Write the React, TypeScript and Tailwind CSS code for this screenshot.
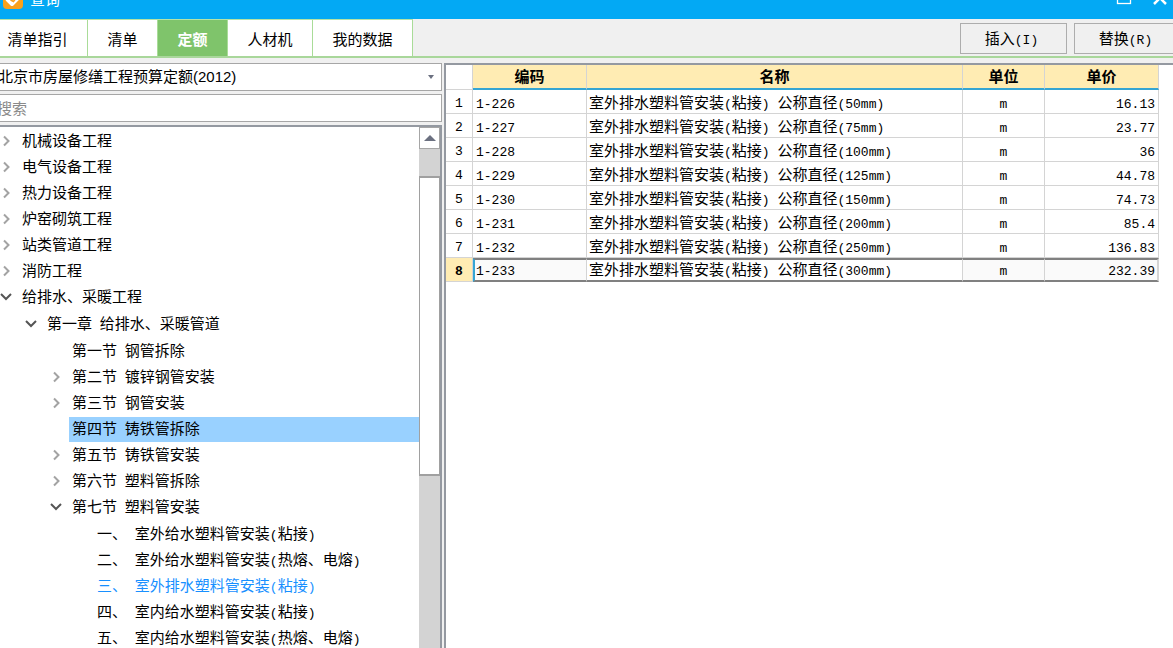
import { useState } from "react";

type Node = { label: string; open?: boolean; leaf?: boolean; children?: Node[] };

const TREE: Node[] = [
  { label: "机械设备工程" },
  { label: "电气设备工程" },
  { label: "热力设备工程" },
  { label: "炉窑砌筑工程" },
  { label: "站类管道工程" },
  { label: "消防工程" },
  {
    label: "给排水、采暖工程",
    open: true,
    children: [
      {
        label: "第一章 给排水、采暖管道",
        open: true,
        children: [
          { label: "第一节 钢管拆除", leaf: true },
          { label: "第二节 镀锌钢管安装" },
          { label: "第三节 钢管安装" },
          { label: "第四节 铸铁管拆除", leaf: true },
          { label: "第五节 铸铁管安装" },
          { label: "第六节 塑料管拆除" },
          {
            label: "第七节 塑料管安装",
            open: true,
            children: [
              { label: "一、 室外给水塑料管安装(粘接)", leaf: true },
              { label: "二、 室外给水塑料管安装(热熔、电熔)", leaf: true },
              { label: "三、 室外排水塑料管安装(粘接)", leaf: true },
              { label: "四、 室内给水塑料管安装(粘接)", leaf: true },
              { label: "五、 室内给水塑料管安装(热熔、电熔)", leaf: true },
            ],
          },
        ],
      },
    ],
  },
];

const HIGHLIGHTED = "第四节 铸铁管拆除";
const CURRENT = "三、 室外排水塑料管安装(粘接)";

const ROWS = [
  ["1-226", "50", "16.13"],
  ["1-227", "75", "23.77"],
  ["1-228", "100", "36"],
  ["1-229", "125", "44.78"],
  ["1-230", "150", "74.73"],
  ["1-231", "200", "85.4"],
  ["1-232", "250", "136.83"],
  ["1-233", "300", "232.39"],
];

const TABS = [
  { label: "清单指引", width: "w-[88px] pr-3" },
  { label: "清单", width: "w-[70px]" },
  { label: "定额", width: "w-[70px]" },
  { label: "人材机", width: "w-[85px]" },
  { label: "我的数据", width: "w-[100px]" },
];

/* Latin runs are set in a monospace face, Chinese runs in the CJK face. */
function Mixed({ text }: { text: string }) {
  return (
    <>
      {text.split(/([\x20-\x7e]+)/).map((run, i) =>
        i % 2 ? (
          <span key={i} className="whitespace-pre font-['Liberation_Mono',monospace] text-[13px] leading-none">
            {run}
          </span>
        ) : (
          run
        ),
      )}
    </>
  );
}

function Chevron({ open }: { open?: boolean }) {
  return open ? (
    <svg className="size-3" viewBox="0 0 12 12" fill="none" stroke="#555" strokeWidth="2">
      <path d="M1 3l5 5 5-5" />
    </svg>
  ) : (
    <svg className="size-3" viewBox="0 0 12 12" fill="none" stroke="#a3a3a3" strokeWidth="2">
      <path d="M4 1.500l4.500 4.500L4 10.500" />
    </svg>
  );
}

function Branch({ nodes, nested }: { nodes: Node[]; nested?: boolean }) {
  return (
    <ul className={nested ? "pt-px pl-[25px]" : "pt-px"}>
      {nodes.map((n) => (
        <li key={n.label}>
          <div className="flex h-[26px] items-center">
            <span className="flex w-[19px] shrink-0">{!n.leaf && <Chevron open={n.open} />}</span>
            <button
              className={`h-[25px] flex-1 pl-[3px] text-left leading-6 whitespace-nowrap ${
                n.label === HIGHLIGHTED ? "bg-[#99d1ff]" : ""
              } ${n.label === CURRENT ? "text-[#1890ff]" : ""}`}
            >
              <Mixed text={n.label} />
            </button>
          </div>
          {n.children && <Branch nodes={n.children} nested />}
        </li>
      ))}
    </ul>
  );
}

export default function App() {
  const [tab, setTab] = useState("定额");
  const [selected, setSelected] = useState(7);

  return (
    <div className="flex h-screen flex-col overflow-hidden bg-[#f0f0f0] font-['Liberation_Sans','Noto_Sans_CJK_SC',sans-serif] text-[15px] text-black">
      <header className="h-[19px] shrink-0 overflow-hidden bg-[#03a9f4] text-white">
        <div className="-mt-[19px] flex h-[38px] items-center pl-[3px]">
          <svg className="size-5" viewBox="0 0 20 20">
            <rect width="20" height="19" rx="4" fill="#f9a11b" />
            <path d="M4 9l5 5 7-7-3-3" fill="none" stroke="#fff" strokeWidth="4" strokeLinejoin="round" />
            <path d="M7.500 10l3 1.500 3-4" fill="none" stroke="#f9a11b" strokeWidth="1.500" />
          </svg>
          <h1 className="flex-1 pl-[7px]">查询</h1>
          <button aria-label="最大化" className="mr-5">
            <svg className="size-4" viewBox="0 0 16 16" fill="none" stroke="#fff" strokeWidth="1.300">
              <rect x="1.500" y="0.500" width="13" height="11" />
            </svg>
          </button>
          <button aria-label="关闭" className="mr-[5px]">
            <svg className="size-4" viewBox="0 0 16 16" fill="none" stroke="#fff" strokeWidth="2.500">
              <path d="M2 0l12 12M14 0L2 12" />
            </svg>
          </button>
        </div>
      </header>

      <div className="flex h-[39px] shrink-0 items-stretch border-b-2 border-[#a9d79b]">
        <nav className="flex border-t border-[#b5e3a6]">
          {TABS.map((t) => (
            <button
              key={t.label}
              onClick={() => setTab(t.label)}
              className={`border-r border-[#a9dc98] pt-1 ${t.width} ${
                tab === t.label ? "bg-[#7fc46b] font-bold text-white" : "bg-white"
              }`}
            >
              {t.label}
            </button>
          ))}
        </nav>
        <div className="-mr-2 ml-auto flex gap-[7px] pt-1">
          <button className="h-[31px] w-[107px] border border-[#adadad] pr-1 leading-7">
            <Mixed text="插入(I)" />
          </button>
          <button className="h-[31px] w-[107px] border border-[#adadad] pr-1 leading-7">
            <Mixed text="替换(R)" />
          </button>
        </div>
      </div>

      <main className="flex min-h-0 flex-1 pt-[5px]">
        <aside className="flex w-[442px] shrink-0 flex-col">
          <div className="relative -ml-2 flex">
            <select
              aria-label="定额库"
              className="h-7 w-full appearance-none border border-[#a6a6a6] bg-white pl-[5px] leading-6"
            >
              <option>北京市房屋修缮工程预算定额(2012)</option>
            </select>
            <svg className="pointer-events-none absolute top-3 right-[7px] h-1 w-2" viewBox="0 0 8 4">
              <path d="M1 0h6L4 4z" fill="#6b7080" />
            </svg>
          </div>
          <input
            aria-label="搜索"
            placeholder="搜索"
            className="mt-[3px] -ml-2 h-7 border border-[#a6a6a6] bg-white pl-1 placeholder:text-[#8a8a8a]"
          />
          <div className="mt-[3px] flex min-h-0 flex-1 overflow-hidden border-t-2 border-r-2 border-[#9499a1] bg-white">
            <div className="min-w-0 flex-1 overflow-hidden">
              <Branch nodes={TREE} />
            </div>
            <div className="flex w-[21px] shrink-0 flex-col bg-[#d3d3d3]">
              <button
                aria-label="向上滚动"
                className="flex h-[22px] items-center justify-center border border-[#a6a6a6] bg-white"
              >
                <svg className="h-1.5 w-3" viewBox="0 0 12 6">
                  <path d="M0 6h12L6 0z" fill="#6b7080" />
                </svg>
              </button>
              <div className="mt-[27px] h-[300px] border-x border-y-2 border-[#a0a0a0] bg-white" />
            </div>
          </div>
        </aside>

        <section className="ml-0.5 min-w-0 flex-1 overflow-hidden border-t-2 border-l-2 border-[#9499a1] bg-white">
          <table className="w-[713px] table-fixed border-separate border-spacing-0">
            <colgroup>
              <col className="w-[27px]" />
              <col className="w-[114px]" />
              <col />
              <col className="w-[82px]" />
              <col className="w-[114px]" />
            </colgroup>
            <thead>
              <tr className="h-[25px] leading-[22px]">
                <th aria-label="序号" className="border-r border-b border-[#d4d4d4] p-0" />
                {["编码", "名称", "单位", "单价"].map((h) => (
                  <th
                    key={h}
                    className="border-r border-b-2 border-r-[#d4d4d4] border-b-[#35a5d3] bg-[#ffecb3] p-0 pt-px font-bold"
                  >
                    {h}
                  </th>
                ))}
              </tr>
            </thead>
            <tbody>
              {ROWS.map(([code, size, price], i) => {
                const on = i === selected;
                const line = on
                  ? "border-y-2 border-y-[#808080] border-r-[#d4d4d4]"
                  : "border-b border-[#d4d4d4] pt-0.5";
                return (
                  <tr key={code} onClick={() => setSelected(i)} className="h-6 leading-[18px]">
                    <td
                      className={`border-r border-b border-[#d4d4d4] p-0 text-center ${
                        on ? "bg-[#ffecb3] font-bold" : ""
                      }`}
                    >
                      <Mixed text={String(i + 1)} />
                    </td>
                    <td
                      className={`border-r ${line} ${
                        on ? "border-l-2 border-l-[#35a5d3] bg-[#fafafa] pl-px" : "pl-[3px]"
                      }`}
                    >
                      <Mixed text={code} />
                    </td>
                    <td className={`border-r pl-0.5 whitespace-nowrap ${line}`}>
                      <Mixed text={`室外排水塑料管安装(粘接) 公称直径(${size}mm)`} />
                    </td>
                    <td className={`border-r text-center ${line} ${on ? "bg-[#fafafa]" : ""}`}>
                      <Mixed text="m" />
                    </td>
                    <td
                      className={`text-right ${line} ${
                        on ? "border-r-2 border-r-[#808080] bg-[#fafafa] pr-0.5" : "border-r pr-[3px]"
                      }`}
                    >
                      <Mixed text={price} />
                    </td>
                  </tr>
                );
              })}
            </tbody>
          </table>
        </section>
      </main>
    </div>
  );
}
